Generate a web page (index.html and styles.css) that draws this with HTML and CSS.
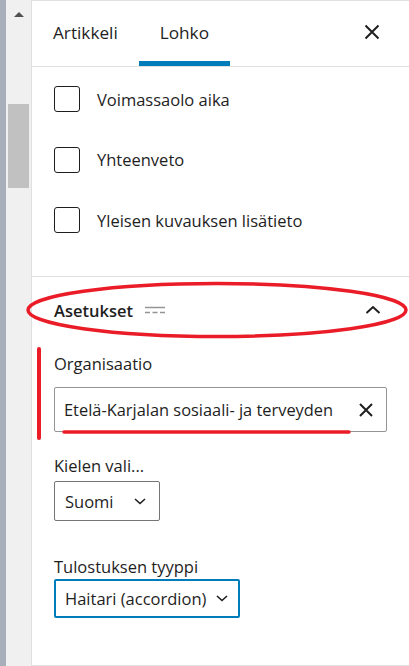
FILE: index.html
```html
<!DOCTYPE html>
<html lang="fi">
<head>
<meta charset="utf-8">
<title>Lohko</title>
<link rel="stylesheet" href="styles.css">
</head>
<body>
<div class="app">
  <div class="edge"></div>
  <div class="scrollbar">
    <div class="sb-arrow"></div>
    <div class="sb-thumb"></div>
  </div>
  <div class="panel">
    <div class="tabs">
      <div class="tab">Artikkeli</div>
      <div class="tab active">Lohko</div>
      <div class="close">
        <svg width="24" height="24" viewBox="0 0 24 24"><path d="M5.5 5.5l13 13M18.5 5.5l-13 13" stroke="#1e1e1e" stroke-width="2" fill="none"/></svg>
      </div>
    </div>
    <div class="section checks">
      <label class="check"><span class="box"></span><span class="clabel">Voimassaolo aika</span></label>
      <label class="check"><span class="box"></span><span class="clabel">Yhteenveto</span></label>
      <label class="check"><span class="box"></span><span class="clabel">Yleisen kuvauksen lisätieto</span></label>
    </div>
    <div class="section settings">
      <div class="sec-head">
        <span class="sec-title">Asetukset</span>
        <svg class="drag" width="20" height="8" viewBox="0 0 20 8"><path d="M0 1.5h20" stroke="#949494" stroke-width="1.5"/><path d="M0 6.5h5M7.5 6.5h5M15 6.5h5" stroke="#949494" stroke-width="1.5"/></svg>
        <svg class="chev-up" width="16" height="10" viewBox="0 0 16 10"><path d="M1.5 8l6.5-6 6.5 6" stroke="#1e1e1e" stroke-width="2" fill="none"/></svg>
      </div>
      <div class="field">
        <div class="flabel">Organisaatio</div>
        <div class="input">
          <span class="ivalue">Etelä-Karjalan sosiaali- ja terveyden</span>
          <svg class="iclear" width="16" height="16" viewBox="0 0 16 16"><path d="M2 2l12 12M14 2L2 14" stroke="#1e1e1e" stroke-width="2" fill="none"/></svg>
        </div>
      </div>
      <div class="field lang">
        <div class="flabel">Kielen vali...</div>
        <div class="select small">
          <span>Suomi</span>
          <svg width="12" height="7" viewBox="0 0 12 7"><path d="M1 1l5 4.5L11 1" stroke="#1e1e1e" stroke-width="1.6" fill="none"/></svg>
        </div>
      </div>
      <div class="field type">
        <div class="flabel">Tulostuksen tyyppi</div>
        <div class="select focused">
          <span>Haitari (accordion)</span>
          <svg width="12" height="7" viewBox="0 0 12 7"><path d="M1 1l5 4.5L11 1" stroke="#1e1e1e" stroke-width="1.6" fill="none"/></svg>
        </div>
      </div>
    </div>
  </div>
  <svg class="marks" width="409" height="666" viewBox="0 0 409 666">
    <ellipse cx="217" cy="310" rx="189" ry="26.5" stroke="#ea1c27" stroke-width="3.5" fill="none"/>
    <path d="M39 349V438" stroke="#ea1c27" stroke-width="4" stroke-linecap="round"/>
    <path d="M64 432H349" stroke="#ea1c27" stroke-width="3.5" stroke-linecap="round"/>
  </svg>
</div>
</body>
</html>
```
FILE: styles.css
```css
* { box-sizing: border-box; }
html, body { margin: 0; padding: 0; }
body {
  font-family: "Open Sans", "Noto Sans", sans-serif;
  color: #1e1e1e;
  background: #fff;
}
.app {
  position: relative;
  display: flex;
  width: 409px;
  height: 666px;
  overflow: hidden;
}
.edge { width: 6px; background: #a8afba; flex: none; }
.scrollbar {
  width: 26px;
  flex: none;
  background: #f0f0f0;
  border-right: 1px solid #e0e0e0;
  display: flex;
  flex-direction: column;
  align-items: flex-start;
}
.sb-arrow {
  margin: 12px 0 0 8px;
  width: 0; height: 0;
  border-left: 5px solid transparent;
  border-right: 5px solid transparent;
  border-bottom: 5px solid #505050;
}
.sb-thumb {
  margin: 87px 0 0 2px;
  width: 21px;
  height: 84px;
  background: #c1c1c1;
}
.panel {
  flex: 1;
  border-top: 1px solid #e0e0e0;
  display: flex;
  flex-direction: column;
}
.tabs {
  display: flex;
  align-items: stretch;
  height: 66px;
  border-bottom: 1px solid #e0e0e0;
  flex: none;
}
.tab {
  padding: 0 21px;
  font-size: 17.2px;
  display: flex;
  align-items: center;
  border-bottom: 5px solid transparent;
  padding-top: 2px;
}
.tab.active { border-bottom-color: #007cba; }
.close {
  margin-left: auto;
  margin-right: 25px;
  display: flex;
  align-items: center;
  padding-bottom: 4px;
}
.section { border-bottom: 1px solid #e0e0e0; padding: 0 22px; }
.checks { padding-top: 19px; height: 210px; }
.check {
  display: flex;
  align-items: center;
  height: 26px;
  margin-bottom: 34.5px;
}
.box {
  width: 26px; height: 26px;
  border: 1.5px solid #1e1e1e;
  border-radius: 3px;
  flex: none;
}
.clabel { margin-left: 17px; font-size: 16.5px; }
.settings { flex: 1; }
.sec-head {
  display: flex;
  align-items: center;
  height: 68px;
  padding-bottom: 2px;
}
.sec-title { font-weight: 600; font-size: 16.5px; }
.drag { margin-left: 12px; }
.chev-up { margin-left: auto; margin-right: 6px; }
.flabel { font-size: 16.5px; line-height: 22px; }
.field { padding-top: 8px; }
.input {
  margin-top: 12px;
  height: 45px;
  border: 1px solid #949494;
  border-radius: 2px;
  display: flex;
  align-items: center;
  padding: 0 12px 0 9px;
  width: 333px;
}
.ivalue { font-size: 16.4px; white-space: nowrap; overflow: hidden; }
.iclear { margin-left: auto; }
.lang { padding-top: 23px; }
.select {
  margin-top: 4px;
  display: inline-flex;
  align-items: center;
  height: 40px;
  border: 1px solid #757575;
  border-radius: 2px;
  padding: 0 12px 0 10px;
  font-size: 16.5px;
}
.select.small { width: 106px; justify-content: space-between; }
.select.small svg { margin-right: 1px; }
.type { padding-top: 35px; }
.select.focused {
  border: 2px solid #007cba;
  width: 186px;
  justify-content: space-between;
  padding: 0 10px 0 9px;
  height: 39px;
  margin-top: 1px;
}
.marks { position: absolute; left: 0; top: 0; pointer-events: none; }
```
